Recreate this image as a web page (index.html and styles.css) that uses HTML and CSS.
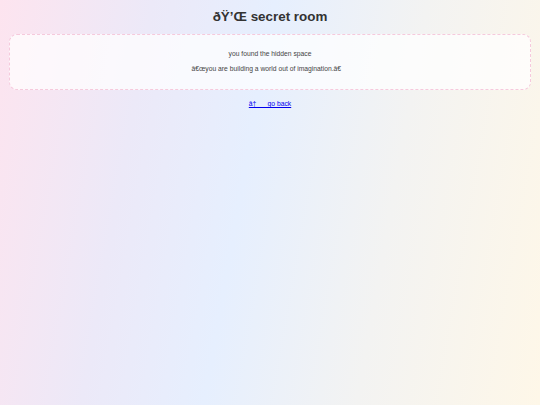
FILE: index.html
```html
<!DOCTYPE html>
<html>
<head>
<meta charset="utf-8">
<link rel="stylesheet" href="styles.css">
</head>
<body>
<h1 class="title">ðŸ’Œ secret room</h1>
<div class="card">
<p class="line">you found the hidden space</p>
<p class="line">â€œyou are building a world out of imagination.â€&nbsp;&nbsp;&nbsp;&nbsp;</p>
</div>
<div class="back"><a class="back-link" href="#">â†&nbsp;&nbsp;&nbsp;&nbsp;&nbsp;&nbsp;go back</a></div>
</body>
</html>
```
FILE: styles.css
```css
html {
  height: 100%;
}
body {
  margin: 0;
  min-height: 100%;
  padding: 0 9px;
  box-sizing: border-box;
  font-family: "Liberation Sans", Arial, sans-serif;
  background: linear-gradient(100deg, #fde4ef 0%, #ece9f8 25%, #e6effe 45%, #f3f3f2 70%, #fef7e8 100%);
  text-align: center;
}
.title {
  margin: 0;
  padding: 9px 0 10px;
  font-size: 13.4px;
  line-height: 15px;
  font-weight: bold;
  color: #333;
}
.card {
  border: 1px dashed #f6c9dc;
  border-radius: 8px;
  background: rgba(255, 255, 255, 0.72);
  padding: 8px 0 9px;
}
.line {
  margin: 7px 0;
  font-size: 6.75px;
  line-height: 8px;
  color: #444;
}
.back {
  margin-top: 10px;
  font-size: 6.75px;
  line-height: 8px;
}
.back-link {
  color: #0000ee;
}
```
